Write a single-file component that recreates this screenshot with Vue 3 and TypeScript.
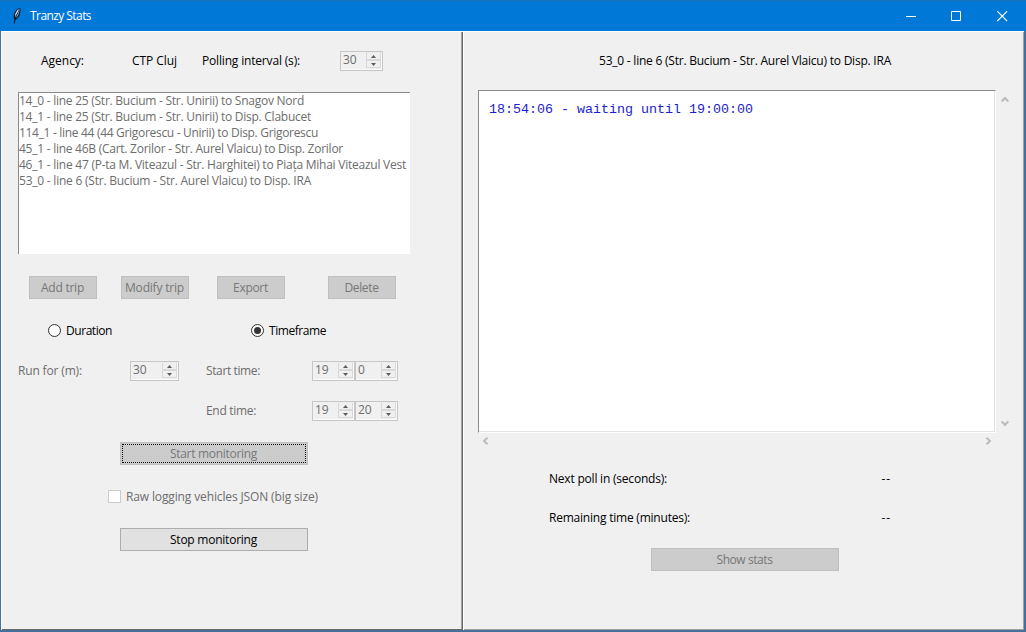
<script setup lang="ts">
import { ref, h, type FunctionalComponent, type Directive } from 'vue'

interface Label { text: string; width: number }

// Spreads a label evenly over the given width in pixels.
const vFit: Directive<HTMLElement, number> = {
  mounted(el, binding) {
    const count = (el.textContent ?? '').length
    const natural = el.getBoundingClientRect().width
    el.style.letterSpacing = `${(binding.value - natural) / count}px`
  },
}

const trips: Label[] = [
  { text: '14_0 - line 25 (Str. Bucium - Str. Unirii) to Snagov Nord', width: 285 },
  { text: '14_1 - line 25 (Str. Bucium - Str. Unirii) to Disp. Clabucet', width: 292 },
  { text: '114_1 - line 44 (44 Grigorescu - Unirii) to Disp. Grigorescu', width: 299 },
  { text: '45_1 - line 46B (Cart. Zorilor - Str. Aurel Vlaicu) to Disp. Zorilor', width: 324 },
  { text: '46_1 - line 47 (P-ta M. Viteazul - Str. Harghitei) to Piața Mihai Viteazul Vest', width: 387 },
  { text: '53_0 - line 6 (Str. Bucium - Str. Aurel Vlaicu) to Disp. IRA', width: 292 },
]
const actions: Label[] = [
  { text: 'Add trip', width: 43 },
  { text: 'Modify trip', width: 59 },
  { text: 'Export', width: 35 },
  { text: 'Delete', width: 34 },
]
const mode = ref<'duration' | 'timeframe'>('timeframe')

const Spin: FunctionalComponent<{ value: number }> = (props) =>
  h('div', { class: 'spin' }, [
    h('span', { class: 'spin-value' }, String(props.value)),
    h('div', { class: 'spin-buttons' }, [
      h('i', [h('svg', { width: 5, height: 3, viewBox: '0 0 5 3' }, [h('path', { d: 'M0 3 2.5 0 5 3Z' })])]),
      h('i', [h('svg', { width: 5, height: 3, viewBox: '0 0 5 3' }, [h('path', { d: 'M0 0 2.5 3 5 0Z' })])]),
    ]),
  ])
Spin.props = ['value']
</script>

<template>
  <div class="window">
    <header class="titlebar">
      <svg class="feather" width="12" height="18" viewBox="0 0 12 18">
        <path d="M3.2 12.6C1.4 8 4 2.2 9.1 .8 10.3 4.4 8.4 10.6 5 12.6Z" fill="#101820" />
        <path d="M3.9 10.4C3.6 6.4 6 2.6 8.6 1.6 9 4.6 7.4 8.8 5.2 10.9Z" fill="#7fa9d2" />
        <path d="M8.2 2.6C6.2 6 4.4 10 3.2 16.4" fill="none" stroke="#0a0f18" stroke-width="1" />
        <path d="M4.6 7.8 7.3 3" fill="none" stroke="#e6f2ff" stroke-width=".9" />
      </svg>
      <span v-fit="61" class="title">Tranzy Stats</span>
      <div class="controls">
        <svg width="11" height="11" viewBox="0 0 11 11"><path d="M1 5.5H11" /></svg>
        <svg width="11" height="11" viewBox="0 0 11 11"><path d="M.5 .5H9.5V9.5H.5Z" /></svg>
        <svg width="11" height="11" viewBox="0 0 11 11"><path d="M.2 .2 10.2 10.2M10.2 .2 .2 10.2" stroke-width="1.2" /></svg>
      </div>
    </header>

    <main class="body">
      <section class="panel left">
        <div class="row agency">
          <div class="cell"><span v-fit="43">Agency:</span></div>
          <div class="cell"><span v-fit="45">CTP Cluj</span></div>
          <div class="cell"><span v-fit="98">Polling interval (s):</span></div>
          <Spin :value="30" />
        </div>

        <ul class="trips">
          <li v-for="t in trips" :key="t.text"><span v-fit="t.width">{{ t.text }}</span></li>
        </ul>

        <div class="row actions">
          <button v-for="a in actions" :key="a.text" class="btn" disabled>
            <span v-fit="a.width">{{ a.text }}</span>
          </button>
        </div>

        <div class="row modes">
          <label class="choice" @click="mode = 'duration'">
            <i class="radio" :class="{ on: mode === 'duration' }"></i><span v-fit="46">Duration</span>
          </label>
          <label class="choice" @click="mode = 'timeframe'">
            <i class="radio" :class="{ on: mode === 'timeframe' }"></i><span v-fit="57">Timeframe</span>
          </label>
        </div>

        <div class="row times">
          <div class="cell"><span v-fit="64">Run for (m):</span></div>
          <Spin class="wide" :value="30" />
          <div class="cell"><span v-fit="54">Start time:</span></div>
          <Spin :value="19" />
          <Spin :value="0" />
        </div>
        <div class="row times">
          <div class="cell end"><span v-fit="50">End time:</span></div>
          <Spin :value="19" />
          <Spin :value="20" />
        </div>

        <button class="btn long start" disabled><span v-fit="87">Start monitoring</span></button>
        <label class="row raw"><i class="check"></i><span v-fit="192">Raw logging vehicles JSON (big size)</span></label>
        <button class="btn long stop"><span v-fit="87">Stop monitoring</span></button>
      </section>

      <section class="panel right">
        <div class="heading"><span v-fit="292">53_0 - line 6 (Str. Bucium - Str. Aurel Vlaicu) to Disp. IRA</span></div>
        <div class="log-grid">
          <div class="log">18:54:06 - waiting until 19:00:00</div>
          <div class="bar vertical">
            <svg width="8" height="7" viewBox="0 0 8 7"><path d="M.7 5.5 4 2 7.3 5.5" /></svg>
            <svg width="8" height="7" viewBox="0 0 8 7"><path d="M.7 1.5 4 5 7.3 1.5" /></svg>
          </div>
          <div class="bar horizontal">
            <svg width="7" height="8" viewBox="0 0 7 8"><path d="M5.5 .7 2 4 5.5 7.3" /></svg>
            <svg width="7" height="8" viewBox="0 0 7 8"><path d="M1.5 .7 5 4 1.5 7.3" /></svg>
          </div>
        </div>
        <div class="status first"><span v-fit="118">Next poll in (seconds):</span><span v-fit="9.5">--</span></div>
        <div class="status"><span v-fit="141">Remaining time (minutes):</span><span v-fit="9.5">--</span></div>
        <button class="btn long stats" disabled><span v-fit="56">Show stats</span></button>
      </section>
    </main>
  </div>
</template>

<style>
body { margin: 0; overflow: hidden; }
.spin {
  box-sizing: border-box; width: 43px; height: 20px; display: flex;
  justify-content: space-between; border: 1px solid #c6c6c6; background: #f0f0f0;
  box-shadow: inset 0 -1px #fafafa, inset -1px 0 #fafafa; color: #6d6d6d;
}
.spin.wide { width: 49px; }
.spin-value { padding-left: 2px; line-height: 16px; letter-spacing: -.2px; }
.spin-buttons { width: 15px; padding-right: 1px; display: grid; grid-template-rows: 8px 8px; }
.spin-buttons i {
  box-sizing: border-box; border: 1px solid #d9d9d9; border-top-color: #ececec;
  display: flex; align-items: center; justify-content: center;
}
.spin-buttons i + i { border-top-color: #d9d9d9; }
.spin-buttons svg { display: block; fill: #5c5c5c; }
</style>

<style scoped>
.window {
  box-sizing: border-box; width: 1026px; height: 632px; display: flex; flex-direction: column;
  background: #44719b; font: 12px/16px "Open Sans", "Noto Sans", sans-serif; color: #000;
}
span { display: block; white-space: pre; }
.titlebar {
  box-sizing: border-box; height: 31px; flex: none; display: flex; align-items: center;
  padding: 0 13px 0 11px; background: #0078d7; border-top: 1px solid #1a6fb9; color: #fff;
}
.feather { display: block; margin-right: 7px; }
.controls { display: flex; gap: 35px; margin-left: auto; padding-right: 5px; }
.controls svg { display: block; fill: none; stroke: #fff; stroke-width: 1; }
.body {
  height: 599px; width: 1023px; margin-left: 1px; display: grid;
  grid-template-columns: 462px 561px; background: #f0f0f0;
}
.panel {
  display: flex; flex-direction: column; align-items: flex-start;
  box-shadow: inset 1px 1px #fff, inset -1px -1px #696969, inset -2px -1px #a0a0a0;
}
.right { box-shadow: inset 1px 1px #fff, inset -1px -1px #a0a0a0; }
.row { display: grid; align-items: center; height: 20px; }
.cell { display: flex; }
.agency { margin: 20px 0 0 40px; grid-template-columns: 91px 70px 138px 43px; }
.trips {
  box-sizing: border-box; list-style: none; margin: 21px 0 0 17px; padding: 0;
  width: 392px; height: 162px; background: #fff; color: #6d6d6d;
  border-top: 1px solid #8a8a8a; border-left: 1px solid #8a8a8a;
}
.trips li { height: 16px; display: flex; }
.btn {
  box-sizing: border-box; height: 23px; width: 68px; padding: 0 1px 0 0; font: inherit; line-height: 20px;
  display: flex; align-items: center; justify-content: center;
  border: 1px solid #adadad; background: #e1e1e1; color: #000;
}
.btn:disabled { border-color: #bfbfbf; background: #ccc; color: #777; }
.btn.long { width: 188px; }
.actions { height: 23px; margin: 22px 0 0 28px; grid-template-columns: 92px 96px 111px 68px; }
.modes { margin: 22px 0 0 47px; grid-template-columns: 203px 100px; }
.choice { display: flex; align-items: center; gap: 5px; }
.radio {
  box-sizing: border-box; width: 13px; height: 13px; margin-bottom: 1px; border: 1px solid #333;
  border-radius: 50%; background: #fff; display: grid; place-items: center;
}
.radio.on::after { content: ''; width: 7px; height: 7px; border-radius: 50%; background: #333; }
.times {
  margin: 20px 0 0 17px; color: #6d6d6d;
  grid-template-columns: 112px 76px 106px 43px 43px;
}
.end { grid-column: 3; }
.start { margin: 21px 0 0 119px; outline: 1px dotted #000; outline-offset: -3px; }
.raw { margin: 22px 0 0 107px; grid-template-columns: 13px auto; column-gap: 5px; color: #6d6d6d; }
.check { box-sizing: border-box; width: 13px; height: 13px; margin-bottom: 1px; border: 1px solid #ccc; background: #fff; }
.stop { margin: 21px 0 0 119px; }
.heading { margin: 22px 0 0 136px; height: 16px; display: flex; }
.log-grid { margin: 21px 0 0 15px; display: grid; grid-template: 343px 16px / 518px 17px; }
.log {
  box-sizing: border-box; background: #fff; padding: 11px 10px;
  border: 1px solid #8a8a8a; border-right-color: #fff; border-bottom-color: #fff;
  box-shadow: inset -1px -1px #e3e3e3;
  font: 13.33px/16px "Liberation Mono", monospace; color: #1c1cd0; white-space: pre;
}
.bar { display: flex; justify-content: space-between; align-items: center; }
.bar svg { display: block; fill: none; stroke: #bcbcbc; stroke-width: 2; }
.vertical { flex-direction: column; padding: 6px 0 6px; }
.horizontal { padding: 0 4px; height: 15px; }
.status { margin: 23px 0 0 86px; width: 342px; height: 16px; display: flex; justify-content: space-between; }
.status.first { margin-top: 22px; }
.stats { margin: 22px 0 0 188px; }
</style>
